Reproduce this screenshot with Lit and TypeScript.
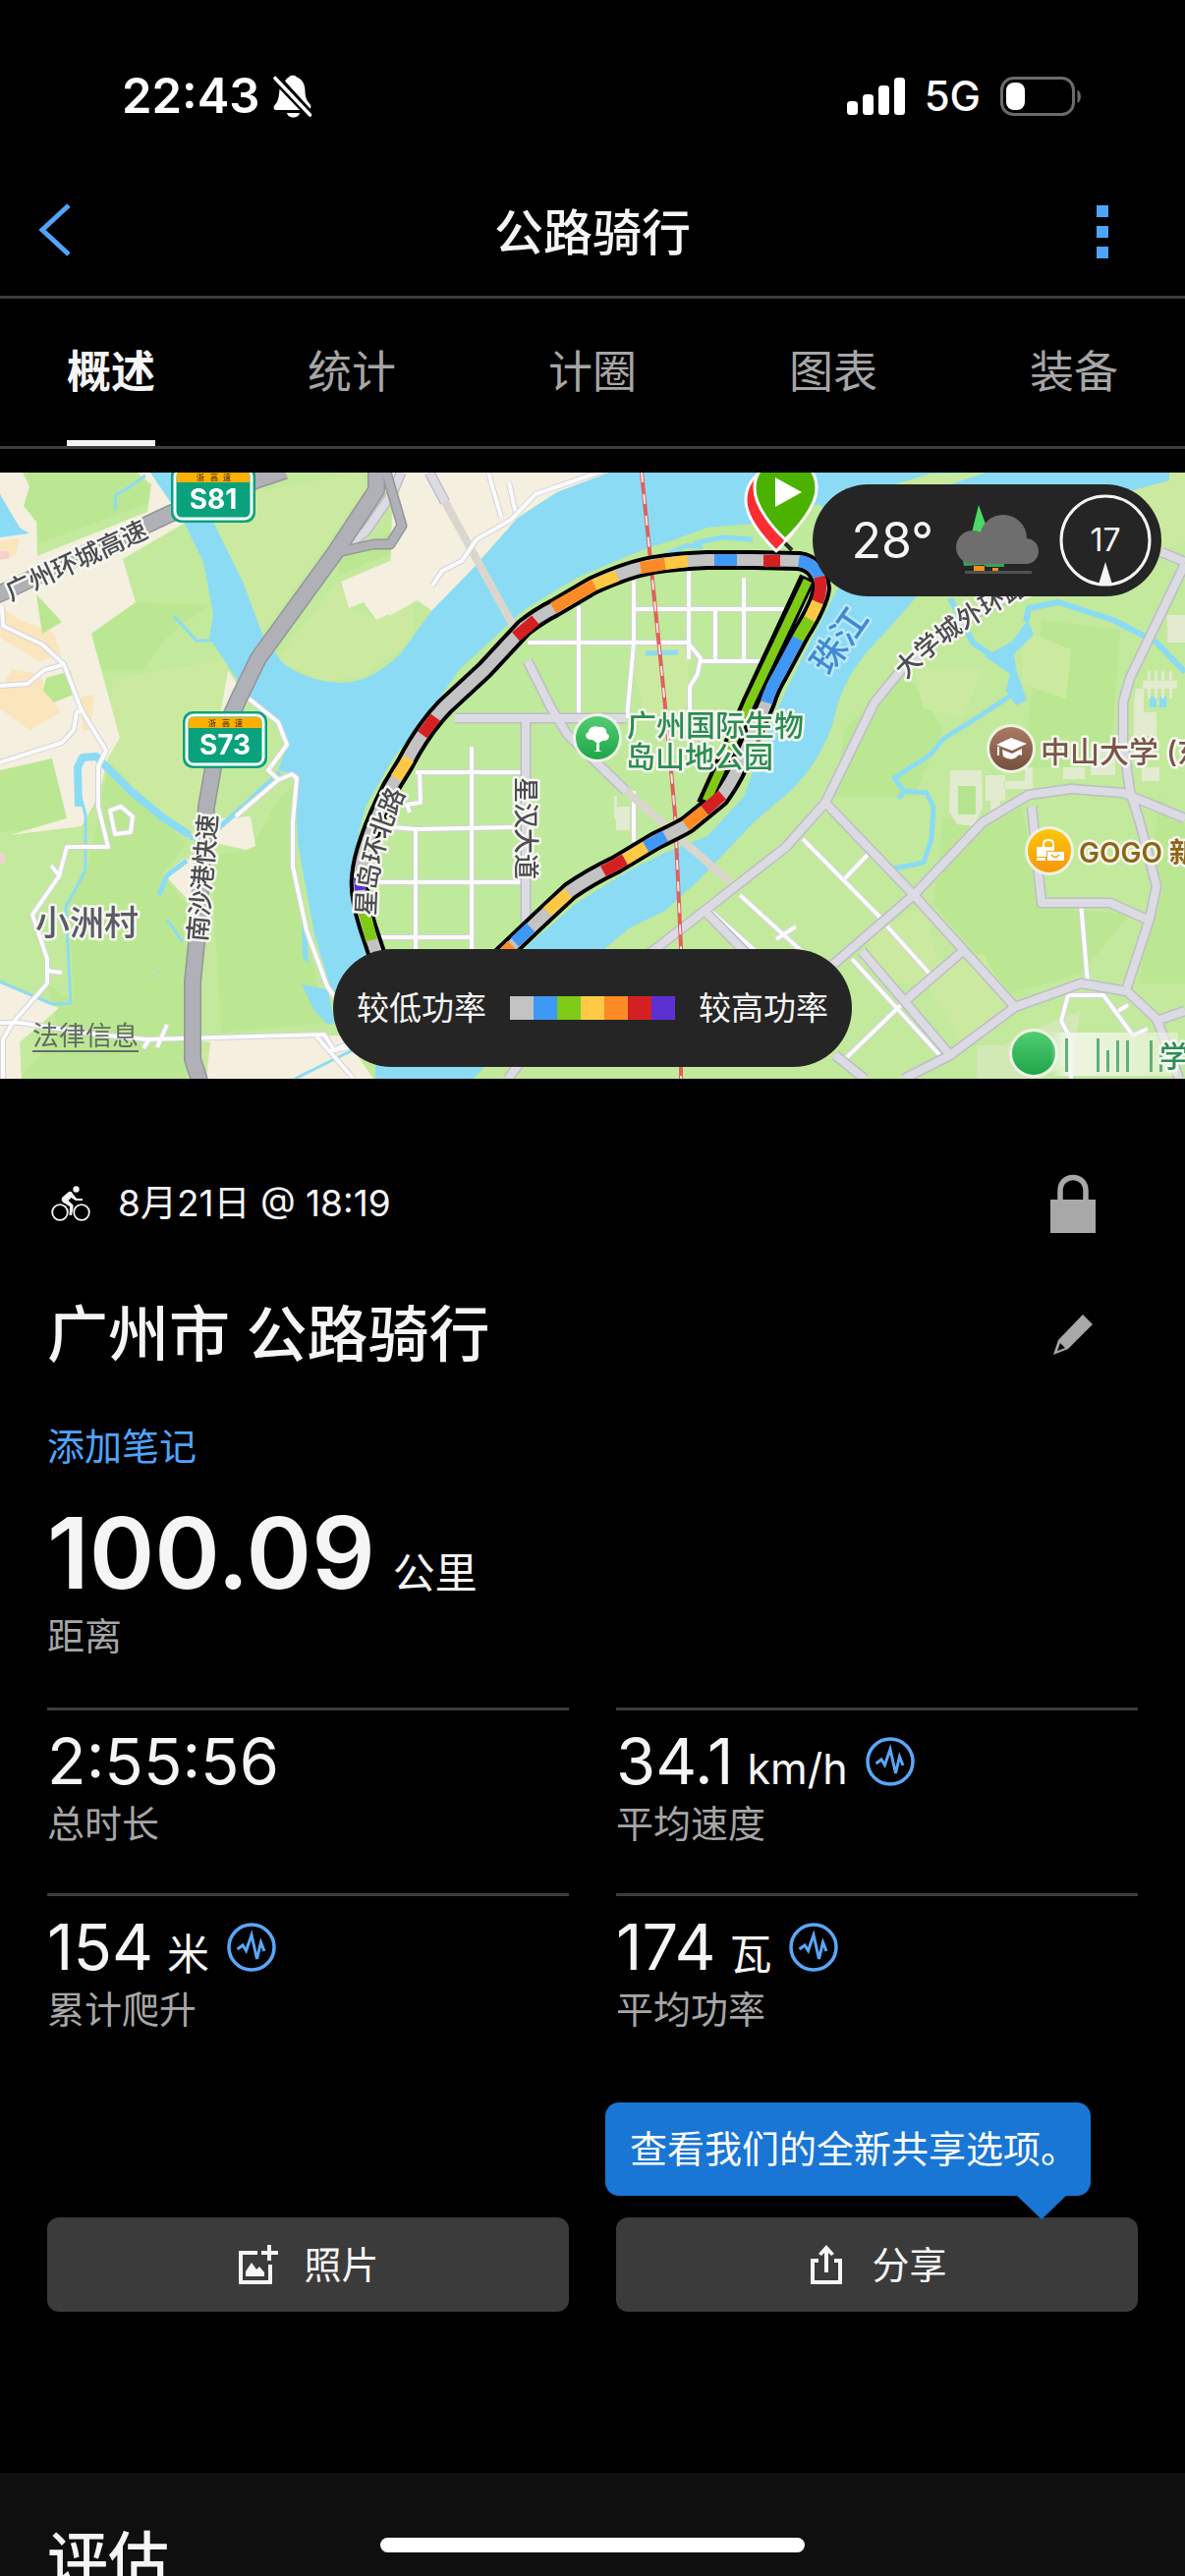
import { LitElement, html, svg, css, nothing } from "lit";
import { customElement, property } from "lit/decorators.js";
import { classMap } from "lit/directives/class-map.js";

const GREY = "#c3c3c3";
const BLUE = "#3f97f6";
const GREEN = "#7fca16";
const YELLOW = "#fdc945";
const ORANGE = "#fc8b25";
const RED = "#d52022";
const PURPLE = "#5c31d3";
const POWER_SCALE = [GREY, BLUE, GREEN, YELLOW, ORANGE, RED, PURPLE];

const sheet = css`
  :host {
    font-family: Inter, "Noto Sans CJK SC", sans-serif;
    color: #f5f5f5;
  }
  *,
  *::before,
  *::after {
    box-sizing: border-box;
  }
  button {
    font: inherit;
    color: inherit;
    background: none;
    border: 0;
    margin: 0;
    padding: 0;
    cursor: pointer;
  }
  svg {
    display: block;
    flex: none;
  }
`;

@customElement("status-bar")
class StatusBar extends LitElement {
  static styles = [
    sheet,
    css`
      :host {
        box-sizing: border-box;
        display: flex;
        justify-content: space-between;
        align-items: center;
        height: 172px;
        padding: 24px 104px 0 124px;
        color: #fff;
      }
      .side {
        display: flex;
        align-items: center;
      }
      .time {
        font-size: 49px;
        line-height: 60px;
        font-weight: 600;
      }
      .left {
        gap: 12px;
      }
      .right {
        gap: 20px;
      }
      .network {
        font-size: 42px;
        line-height: 60px;
        font-weight: 500;
      }
    `,
  ];
  render() {
    return html`
      <div class="side left">
        <span class="time">22:43</span>
        <svg width="42" height="46" viewBox="0 0 42 46" fill="#fff">
          <path d="M13 7.5C14.500 5 16 4 17 3.500 18 1 24 1 25 3.500 31 6 33.500 11 33.500 18 33.500 24 35.500 28 38.500 31 40 33 39.500 34.500 38.500 35.500Z" />
          <path d="M7.500 15.500 28 37H4C1 37 1 33.500 3 31.500 6.500 28 7 22 7.500 15.500Z" />
          <path d="M15 40H28C27 46 16 46 15 40Z" />
          <path d="M3 4.500 38.500 42" stroke="#fff" stroke-width="3.600" stroke-linecap="round" />
        </svg>
      </div>
      <div class="side right">
        <svg width="60" height="40" viewBox="0 0 60 40" fill="#fff">
          <rect x="1" y="25" width="11" height="14" rx="3.500" />
          <rect x="17" y="18" width="11" height="21" rx="3.500" />
          <rect x="33" y="9" width="11" height="30" rx="3.500" />
          <rect x="49" y="1" width="11" height="38" rx="3.500" />
        </svg>
        <span class="network">5G</span>
        <svg width="84" height="40" viewBox="0 0 84 40">
          <rect x="1.500" y="1.500" width="73" height="37" rx="12" fill="none" stroke="#6b6b6b" stroke-width="3" />
          <rect x="6" y="6" width="19" height="28" rx="8" fill="#fff" />
          <path d="M78.500 13.500C83 15.500 83 25 78.500 27Z" fill="#6b6b6b" />
        </svg>
      </div>
    `;
  }
}

@customElement("title-bar")
class TitleBar extends LitElement {
  static styles = [
    sheet,
    css`
      :host {
        box-sizing: border-box;
        display: grid;
        grid-template-columns: 120px 1fr 120px;
        align-items: center;
        height: 132px;
        border-bottom: 3px solid #3d3d3d;
      }
      h1 {
        margin: 0;
        text-align: center;
        font-size: 50px;
        line-height: 60px;
        font-weight: 500;
      }
      .back {
        padding: 0 0 6px 38px;
      }
      .more {
        justify-self: end;
        padding: 0 77px 0 20px;
      }
    `,
  ];
  render() {
    return html`
      <button class="back" aria-label="返回">
        <svg width="36" height="56" viewBox="0 0 36 56" fill="none" stroke="#4fa4fb" stroke-width="5">
          <path d="M32 3 5 28 32 53" />
        </svg>
      </button>
      <h1>公路骑行</h1>
      <button class="more" aria-label="更多">
        <svg width="14" height="56" viewBox="0 0 14 56" fill="#4fa4fb">
          <path d="M1 0h12v12H1zM1 21h12v12H1zM1 42h12v12H1z" />
        </svg>
      </button>
    `;
  }
}

@customElement("tab-strip")
class TabStrip extends LitElement {
  @property({ attribute: false }) tabs: string[] = [];
  @property({ type: Number }) active = 0;
  static styles = [
    sheet,
    css`
      :host {
        box-sizing: border-box;
        display: flex;
        justify-content: space-between;
        height: 153px;
        padding: 0 68px;
        border-bottom: 3px solid #3d3d3d;
      }
      .tab {
        padding-top: 6px;
        border-bottom: 6px solid transparent;
        font-size: 45px;
        line-height: 60px;
        color: #a6a6a6;
      }
      .tab.on {
        color: #f5f5f5;
        font-weight: 700;
        border-color: #f5f5f5;
      }
    `,
  ];
  render() {
    return this.tabs.map(
      (t, i) => html`<button class=${classMap({ tab: true, on: i === this.active })} aria-pressed=${i === this.active}>${t}</button>`
    );
  }
}

const GREEN_PATCHES = [
  "27,0 138,0 150,12 154,30 40,72 38,50 24,34 30,14",
  "93,164 138,132 213,135 173,164 145,201 103,201",
  "0,303 53,291 68,352 40,362 0,366",
  "110,300 140,330 190,378 165,409 190,440 190,617 20,617 60,570 48,520 75,540 70,440 90,400",
  "215,390 255,384 285,330 298,320 300,400 330,560 225,570",
  "345,80 400,60 404,80 345,104",
  "860,260 920,200 960,260 930,330 850,330",
  "960,350 1000,360 1040,340 1060,440 1150,450 1100,510 1030,530 950,440",
  "1060,150 1140,160 1130,300 1040,300",
  "1180,330 1206,360 1206,520 1160,520",
  "540,262 640,300 640,380 560,420 542,420",
  "400,310 530,280 530,350 400,350",
];
const PALE_PATCHES = [
  "115,210 232,190 215,330 200,370 160,350 110,290",
  "200,30 370,0 372,18 262,170",
  "280,192 345,110 355,138 383,150 420,130 420,170 370,208 330,212",
  "930,200 1000,200 980,250 940,240",
  "1040,160 1090,180 1085,230 1040,215",
  "880,470 940,440 960,520 900,520",
  "930,500 1000,490 1030,540 980,580",
  "1080,30 1206,10 1206,70 1100,110",
  "960,10 1100,20 1206,0 1206,30 1000,60",
  "230,576 320,576 325,590 300,617 215,617 205,590",
];

const CREAM = [
  "0,0 23,0 30,14 24,34 37,50 38,85 150,40 154,12 140,0 175,0 190,50 125,88 138,132 93,164 122,270 110,290 100,330 83,360 10,369 68,352 53,291 0,303",
  "400,0 620,0 567,20 527,46 480,99 441,142 425,130 396,146",
  "0,520 60,545 20,580 22,617 0,617",
  "167,409 187,393 197,395 194,438",
  "222,352 255,350 260,380 250,384 220,377",
  "232,201 241,215 224,247",
  "347,111 420,80 420,132 383,150 370,132 355,138",
  "190,575 350,573 380,617 210,617 214,580 194,577",
];

const WHITE_ROADS = [
  "M2,136 3,156 43,175 65,195 83,242 108,283 100,299 100,340 110,381 68,381 60,411 33,450 48,495 48,520 13,560 3,577V617",
  "M0,217 28,215 45,201 63,196",
  "M0,295 63,275 75,262 78,244 84,242",
  "M112,344 123,340 135,350 133,366 117,368Z",
  "M48,507 63,509M52,400 60,410",
  "M0,560H20L100,572 150,577 330,572 340,588 382,580",
  "M146,586 152,577M160,585 170,562",
  "M240,350 283,313 297,307 302,311 298,356 298,401 312,466 333,523 345,540",
  "M253,230 283,254 292,277 273,303 284,313",
  "M322,574 360,617M335,590 400,560",
  "M537,173H700L713,189 710,205 702,218V250",
  "M713,192H775M589,136V245M645,110V173L638,250M701,99V190M728,140V192M757,107V192M647,139H798",
  "M480,279V490M423,305H530M427,306 428,336 414,338 417,346M423,362V490M377,359 423,363 523,361M372,417H530M378,473H480M645,324V376",
  "M497,0 510,45M518,10 525,42",
  "M817,373 897,454M903,462 947,511M860,413 883,389M867,495 960,597M1100,438 1107,520",
  "M1087,532H1123L1153,573M1153,573 1168,566M1138,548 1148,542M1087,532 1080,558 1090,577V617",
  "M723,446 800,515M753,430 830,500M790,475 810,462M860,597 923,536",
];

const GREY_ROADS = [
  "M463,250H637",
  "M535,254V458",
  "M537,192 560,238 577,266 637,324",
  "M437,0 453,30",
  "M1182,81 1206,91",
  "M1206,93 1150,209 1143,234V275L1150,324 1160,356 1177,421 1170,454 1147,524",
  "M517,617 560,560 667,485 717,446 800,381 840,336 890,234 917,201 980,150 1040,120",
  "M840,336 930,430 1033,544",
  "M800,530 850,499 930,430 1000,356 1047,328 1090,322 1143,326 1206,352",
  "M1050,340 1060,438H1130L1170,456",
  "M920,617 967,593 1033,544 1100,520 1147,528 1177,556 1190,589 1200,617M1177,558 1206,548",
  "M923,536 980,487M877,487 967,593M850,593 880,617M717,446 770,500",
  "M347,79 372,60 400,20 408,0",
];

const ROUTE =
  "M385,495 374,462Q364,430 366,412 368,380 398,320L412,297Q430,262 453,238L493,201 533,158Q548,146 564,138L603,115Q640,98 665,94 690,90 720,89L767,89 813,90Q834,93 836,118 834,134 815,164L793,205Q784,220 780,234L752,299Q744,316 733,331L700,358Q694,362 667,375L627,399Q600,412 580,426L550,454 508,494";

const ROUTE_PARTS: [string, string][] = [
  [GREEN, "M371,447 378,476"],
  [PURPLE, "M366,412 367,425"],
  [YELLOW, "M403,311 416,291"],
  [RED, "M430,267 443,249"],
  [RED, "M525,167 545,150"],
  [ORANGE, "M563,138 605,114"],
  [YELLOW, "M605,114 628,105"],
  [ORANGE, "M652,97 677,93"],
  [YELLOW, "M677,93 700,90"],
  [BLUE, "M727,89H750"],
  [RED, "M777,90H794"],
  [BLUE, "M813,90Q829,92 834,106"],
  [RED, "M834,106Q837,118 832,132"],
  [YELLOW, "M832,132 824,149"],
  [GREEN, "M824,149 812,169"],
  [BLUE, "M812,169 793,205Q784,220 780,234"],
  [RED, "M735,328 717,344"],
  [ORANGE, "M717,344 698,359"],
  [BLUE, "M677,370 657,381"],
  [YELLOW, "M657,381 636,394"],
  [RED, "M636,394 614,406"],
  [YELLOW, "M578,428 557,447"],
  [BLUE, "M540,463 524,478"],
  [ORANGE, "M521,481 508,494"],
];

@customElement("ride-map")
class RideMap extends LitElement {
  static styles = [
    sheet,
    css`
      :host {
        display: block;
        position: relative;
        overflow: hidden;
        aspect-ratio: 1206 / 617;
      }
      .canvas {
        width: 100%;
        height: 100%;
      }
      text {
        font-family: Inter, "Noto Sans CJK SC", sans-serif;
        font-weight: 500;
        paint-order: stroke;
        stroke: #f6f7f0;
        stroke-width: 5px;
        stroke-linejoin: round;
      }
      .road {
        font-size: 26px;
        fill: #4c4c52;
      }
      .village {
        font-size: 35px;
        fill: #5b5b66;
      }
      .park {
        font-size: 30px;
        fill: #2b8c52;
      }
      .river {
        font-size: 36px;
        fill: #4189d2;
        stroke: #b6e8fa;
      }
      .school {
        font-size: 30px;
        fill: #7b5548;
      }
      .shop {
        font-size: 28px;
        font-weight: 600;
        fill: #8f6514;
      }
      .code {
        font-size: 28px;
        font-weight: 700;
        fill: #fff;
        stroke: none;
      }
      .prov {
        font-size: 8px;
        fill: #4c3a10;
        stroke: none;
      }
      .weather,
      .legend {
        position: absolute;
        display: flex;
        align-items: center;
        background: #252525;
      }
      .weather {
        top: 12px;
        right: 24px;
        height: 114px;
        padding: 0 10px 0 40px;
        border-radius: 57px;
      }
      .temp {
        font-size: 50px;
        line-height: 60px;
        margin-right: 22px;
      }
      .sky {
        margin-right: 20px;
      }
      .wind {
        display: grid;
        place-items: center;
      }
      .wind > * {
        grid-area: 1 / 1;
      }
      .speed {
        font-size: 32px;
        line-height: 40px;
      }
      .legend {
        bottom: 12px;
        left: 50%;
        transform: translateX(-50%);
        height: 120px;
        gap: 24px;
        padding: 0 24px;
        border-radius: 60px;
        font-size: 33px;
        line-height: 40px;
        white-space: nowrap;
      }
      .scale {
        display: flex;
      }
      .step {
        width: 24px;
        height: 24px;
      }
      .legal {
        position: absolute;
        left: 33px;
        bottom: 25px;
        font-size: 27px;
        line-height: 36px;
        color: #656c62;
        text-underline-offset: 5px;
      }
    `,
  ];

  shield(x: number, y: number, code: string) {
    return svg`<g transform="translate(${x} ${y})">
      <rect width="86" height="58" rx="10" fill="#0aa27c" />
      <rect x="4" y="4" width="78" height="50" rx="7" fill="none" stroke="#fff" stroke-width="3" />
      <path d="M6 17V11Q6 6 11 6H75Q80 6 80 11V17Z" fill="#fdb000" />
      <text class="prov" x="26" y="15">浙</text>
      <text class="prov" x="40" y="15">高</text>
      <text class="prov" x="53" y="15">速</text>
      <text class="code" x="43" y="44" text-anchor="middle">${code}</text>
    </g>`;
  }

  pin(x: number, y: number, fill: string) {
    return svg`<g transform="translate(${x} ${y})" fill="url(#${fill})">
      <circle r="25" fill="#f2f4ea" opacity="0.900" />
      <circle r="22" />
    </g>`;
  }

  drawing() {
    return svg`
      <defs>
        <linearGradient id="leaf" x2="0" y2="1"><stop stop-color="#52cd72" /><stop offset="1" stop-color="#1fa548" /></linearGradient>
        <linearGradient id="bark" x2="0" y2="1"><stop stop-color="#a97a62" /><stop offset="1" stop-color="#75503f" /></linearGradient>
        <linearGradient id="sun" x2="0" y2="1"><stop stop-color="#fcc70c" /><stop offset="1" stop-color="#f7960c" /></linearGradient>
        <linearGradient id="fade"><stop stop-color="#fff" stop-opacity="0" /><stop offset="0.150" stop-color="#f3f6ea" stop-opacity="0.900" /><stop offset="1" stop-color="#f3f6ea" stop-opacity="0.500" /></linearGradient>
        <path id="north-road" d="M382,451Q381,395 411,330" />
        <path id="outer-road" d="M922,211Q975,153 1075,110" />
      </defs>
      <rect width="1206" height="617" fill="#c3e99d" />
      <g fill="#bbe793">${GREEN_PATCHES.map((p) => svg`<polygon points=${p} />`)}</g>
      <g fill="#cbeaa0">${PALE_PATCHES.map((p) => svg`<polygon points=${p} />`)}</g>
      <g fill="#f4efdf">${CREAM.map((p) => svg`<polygon points=${p} />`)}</g>
      <g fill="#fbe5bd">
        <polygon points="3,138 20,150 55,163 62,185 40,192 0,168" />
        <polygon points="0,70 20,66 16,84 0,90" />
        <polygon points="12,200 40,205 46,218 62,244 30,262 0,240 0,222" />
        <polygon points="82,228 96,226 92,262 84,262" />
      </g>
      <g fill="#f6cfd0"><rect x="0" y="80" width="9" height="8" /><rect x="0" y="388" width="5" height="10" /></g>
      <g fill="#b9e690">
        <polygon points="37,124 63,152 43,164" />
        <polygon points="47,209 72,202 77,225 55,234 44,222" />
      </g>
      <g fill="#8bdbf5">
        <path d="M153,0 187,50 207,91 217,144 213,168 240,209 253,230 283,250 293,275 283,303 300,307 303,377 320,470 340,536 382,590 382,617H482L520,575 560,530 613,487 640,464 677,446 713,413 767,356 800,328Q832,300 848,255 856,205 900,164L933,126 1000,60 1190,8V0H620L567,20 527,46 480,99 440,140 407,185Q377,214 347,214 310,212 287,193L267,164 247,111 217,50 173,0Z" />
        <polygon points="0,22 20,56 30,62 0,66" />
        <polygon points="183,479 163,507 147,520 165,504" />
        <polygon points="307,521 333,526 341,560 334,562 320,548" />
        <polygon points="307,455 312,468 314,500 308,494" />
        <polygon points="1030,172 1046,150 1052,165 1032,185 1034,200 1045,232 1034,237 1024,222 1028,205 1002,187" />
        <rect x="1170" y="228" width="7" height="11" /><rect x="1180" y="228" width="7" height="11" />
      </g>
      <g fill="none" stroke="#8bdbf5" stroke-linejoin="round">
        <path stroke-width="8" d="M80,340 79,300 84,290 98,289 133,324 167,352 193,369" />
        <path stroke-width="5" d="M193,372 220,364 245,342 285,305M190,395 170,410 162,430" />
        <path stroke-width="3" d="M82,330 87,348V405L67,442 72,540 53,541 0,518M177,146 200,171H217M148,3 127,18 118,22 117,38M170,455 186,478M300,617 385,575" />
        <path stroke-width="6" d="M967,128 990,173 1010,187M1044,152 1047,138 1077,132 1133,150 1177,173 1206,203" />
        <path stroke-width="5" d="M1030,226 1000,246 960,271 947,287 910,311 920,324 943,326 950,340 948,373 940,397 910,403M920,324 915,332" />
      </g>
      <path fill="#bfe99b" d="M358,397 366,470 385,520 395,600H470L504,510 587,438 640,405 677,387 720,370 757,330 780,266 800,222 833,156 856,111V50L833,32 800,44 767,52 720,56 690,67 653,79 587,107 533,140 467,201 433,250 400,291 372,340Z" />
      <polygon fill="#cbeaa0" points="640,178 700,176 702,245 655,245" />
      <path fill="none" stroke="#8bdbf5" stroke-width="5" d="M676,84 700,74 715,76M706,72 735,66 766,68M657,184 690,183" />
      <polygon fill="#c6ea9e" points="911,12 947,1 1003,0 967,12" />
      <g fill="#e6ead6" opacity="0.900">
        <polygon points="967,303 999,303 1000,340 992,360 974,358 966,345" />
        <path d="M1003,308h20v26h-5v12h-10v-12h-5zM1022,322h29v-22h-8v14h-21z" />
        <path d="M1156,220h8v24h13v24h-23v-34zM1163,212h35v8h-35zM1168,202h3v28h-3zM1175,202h3v28h-3zM1182,202h3v28h-3zM1190,202h3v28h-3z" />
        <path d="M1082,300h22v12h-22zM1110,280h25v28h-25zM1162,300h18v14h-18zM625,329h3v24h-3zM627,340h14v24h-14zM1188,145h18v28h-18z" />
        <path d="M1068,560 1100,548 1090,600 1060,617H994V583H1022Z" opacity="0.500" />
      </g>
      <polygon fill="#b5e48f" points="975,319 993,319 993,348 975,348" />
      <g fill="none" stroke-linejoin="round">
        <g stroke="#d3d3da" stroke-width="6">${WHITE_ROADS.map((d) => svg`<path d=${d} />`)}</g>
        <g stroke="#fbfbfc" stroke-width="4">${WHITE_ROADS.map((d) => svg`<path d=${d} />`)}</g>
        <path stroke="#dbd6cd" stroke-width="8" d="M453,30 530,170M637,324 743,417" />
        <g stroke="#bdbdc6" stroke-width="11">${GREY_ROADS.map((d) => svg`<path d=${d} />`)}</g>
        <g stroke="#dcdbe4" stroke-width="8">${GREY_ROADS.map((d) => svg`<path d=${d} />`)}</g>
        <path stroke="#d3d3da" stroke-width="6" d="M440,115 450,100 470,90 485,68 520,48 545,22 620,-4" />
        <path stroke="#fbfbfc" stroke-width="4" d="M440,115 450,100 470,90 485,68 520,48 545,22 620,-4" />
        <g stroke="#94949b">
          <path stroke-width="18" d="M-4,125 173,42 260,8 290,-2M205,625 196,597V519L200,479 210,340 220,283 243,230 263,189 340,83 383,18V-4" />
          <path stroke-width="11" d="M340,82 380,73 397,73 409,54 392,-4" />
        </g>
        <g stroke="#b0b0b7">
          <path stroke-width="15" d="M-4,125 173,42 260,8 290,-2M205,625 196,597V519L200,479 210,340 220,283 243,230 263,189 340,83 383,18V-4" />
          <path stroke-width="8" d="M340,82 380,73 397,73 409,54 392,-4" />
        </g>
        <path stroke="#e0605c" stroke-width="4" d="M653,0 677,238 687,348 693,483V617" />
        <path stroke="#fdeceb" stroke-width="2" stroke-dasharray="10 12" d="M653,0 677,238 687,348 693,483V617" />
        <g stroke="#000" stroke-width="20">
          <path stroke-width="17" d="M822,107 763,234 733,303 717,338" />
          <path d=${ROUTE} />
        </g>
        <path stroke=${GREEN} stroke-width="9" d="M822,110 763,234 733,303 719,334" />
        <path stroke=${GREY} stroke-width="12" d=${ROUTE} />
        <g stroke-width="12">${ROUTE_PARTS.map(([c, d]) => svg`<path stroke=${c} d=${d} />`)}</g>
      </g>
      ${this.shield(174, -7, "S81")} ${this.shield(186, 243, "S73")}
      <g>
        <text class="road" transform="translate(11 131) rotate(-25)">广州环城高速</text>
        <text class="village" x="36" y="471">小洲村</text>
        <text class="road" transform="translate(210 478) rotate(-85)">南沙港快速</text>
        <text class="road"><textPath href="#north-road">星岛环北路</textPath></text>
        <text class="road" transform="translate(526 310) rotate(90)">星汉大道</text>
        <text class="river" transform="translate(854 171) rotate(-55)" y="13" text-anchor="middle">珠江</text>
        <text class="road"><textPath href="#outer-road">大学城外环路</textPath></text>
        <text class="park" x="638" y="268">广州国际生物</text>
        <text class="park" x="637" y="300">岛山地公园</text>
        <text class="school" x="1059" y="295">中山大学 (东</text>
        <text class="shop" x="1098" y="397">GOGO 新</text>
      </g>
      ${this.pin(608, 270, "leaf")} ${this.pin(1029, 281, "bark")} ${this.pin(1068, 385, "sun")} ${this.pin(1052, 591, "leaf")}
      <g fill="#fff">
        <path d="M607 283v-8l-4-3c-7 1-9-6-4-8 0-5 7-7 10-5 6-1 9 3 8 6 6 3 2 9-4 8l-3 2v8l3 1h-9z" />
        <path d="M1014 277 1029 270 1045 276 1030 283ZM1020 282 1030 286 1040 281V288Q1037 286 1034 290 1029 294 1021 289ZM1015 279h2v9h-2z" />
        <path d="M1055 381h18v4h-8v6h-10zM1055 392h9v3h-9zM1066 386h17v9h-17z" />
      </g>
      <path d="M1062 381v-3q0-4 5-4t5 4v3" fill="none" stroke="#fff" stroke-width="2" />
      <path d="M1070 389q4 5 8 0" fill="none" stroke="#f9a40c" stroke-width="1.500" />
      <path d="M1069 570h130v44h-130z" fill="url(#fade)" />
      <g fill="#3e9f62" opacity="0.800">
        <path d="M1084 576h3v34h-3zM1116 576h3v34h-3zM1126 588h3v22h-3zM1136 578h3v32h-3zM1146 578h3v32h-3zM1170 578h3v32h-3zM1180 588h3v22h-3z" />
      </g>
      <text class="park" x="1180" y="605">学</text>
      <g stroke="#fff" stroke-width="3" stroke-linejoin="round">
        <path fill="#f92d33" d="M790 80C778 68 759 46 759 28 759 10 772-4 790-4S821 10 821 28C821 46 802 68 790 80Z" />
        <path fill="#4bb300" d="M799 68C786 56 768 34 768 16 768-3 782-14 800-14S831-3 831 16C831 34 812 56 799 68Z" />
      </g>
      <path fill="#fff" d="M789 5 816 20 789 35Z" />
      <path fill="none" stroke="#000" stroke-width="4" opacity="0.800" d="M799 72 806 79" />
    `;
  }

  render() {
    return html`
      <svg class="canvas" viewBox="0 0 1206 617" preserveAspectRatio="xMidYMid slice" role="img" aria-label="骑行路线">${this.drawing()}</svg>
      <a class="legal" href="#legal">法律信息</a>
      <div class="weather">
        <span class="temp">28°</span>
        <svg class="sky" width="86" height="78" viewBox="971 512 86 78">
          <path fill="#4cd964" d="M995 515 1003 537 997 545 988 543Z" />
          <path fill="#34a853" d="M979 571H1021V578H1003L1000 576 980 577Z" />
          <g fill="#6e6e6e">
            <circle cx="989" cy="558" r="17" /><circle cx="1020" cy="549" r="24" /><circle cx="1043" cy="562" r="13" />
            <rect x="989" y="553" width="54" height="22" />
          </g>
          <path fill="#fb8c1e" d="M990 577h11v5h-11zM1009 579h6v3h-6z" />
          <path fill="#505050" d="M981 582h68v3h-68z" />
        </svg>
        <div class="wind">
          <svg width="94" height="94" viewBox="0 0 94 94">
            <circle cx="47" cy="47" r="45" fill="none" stroke="#f5f5f5" stroke-width="3" />
            <path fill="#f5f5f5" d="M47 69 54 92H40Z" />
          </svg>
          <span class="speed">17</span>
        </div>
      </div>
      <div class="legend">
        <span>较低功率</span>
        <div class="scale">${POWER_SCALE.map((c) => html`<span class="step" style="background:${c}"></span>`)}</div>
        <span>较高功率</span>
      </div>
    `;
  }
}

@customElement("stat-cell")
class StatCell extends LitElement {
  @property() value = "";
  @property() unit = "";
  @property() label = "";
  @property({ type: Boolean }) chart = false;
  static styles = [
    sheet,
    css`
      :host {
        box-sizing: border-box;
        display: block;
        height: 189px;
        padding-top: 14px;
        border-top: 3px solid #3d3d3d;
      }
      .row {
        display: flex;
        align-items: center;
        gap: 18px;
        height: 76px;
      }
      .reading {
        display: flex;
        align-items: baseline;
        gap: 14px;
      }
      .value {
        font-size: 65px;
        line-height: 76px;
      }
      .unit {
        font-size: 43px;
        line-height: 44px;
      }
      .label {
        font-size: 38px;
        line-height: 50px;
        color: #a6a6a6;
      }
    `,
  ];
  render() {
    return html`
      <div class="row">
        <div class="reading">
          <span class="value">${this.value}</span>
          ${this.unit ? html`<span class="unit">${this.unit}</span>` : nothing}
        </div>
        ${this.chart
          ? html`<button aria-label="查看图表">
              <svg width="50" height="50" viewBox="0 0 50 50" fill="none" stroke="#5aa7f9">
                <circle cx="25" cy="25" r="23" stroke-width="3.500" />
                <path stroke-width="3" d="M10.500 27 16 23 19.500 28.500 25 12.500 30.500 37 34.500 20 38 29" />
              </svg>
            </button>`
          : nothing}
      </div>
      <div class="label">${this.label}</div>
    `;
  }
}

@customElement("app-root")
class AppRoot extends LitElement {
  static styles = [
    sheet,
    css`
      :host {
        display: flex;
        flex-direction: column;
        position: relative;
        height: 100vh;
        overflow: hidden;
        background: #000;
      }
      status-bar,
      title-bar,
      tab-strip,
      ride-map,
      section {
        flex: none;
      }
      ride-map {
        margin-top: 24px;
      }
      .summary {
        padding: 92px 48px 164px;
      }
      .line {
        display: flex;
        justify-content: space-between;
        align-items: center;
        padding-right: 34px;
      }
      .meta {
        display: flex;
        align-items: center;
        gap: 28px;
        padding-left: 4px;
        font-size: 37px;
        line-height: 70px;
      }
      .tool {
        display: grid;
        place-items: center;
        width: 64px;
        height: 70px;
      }
      h2 {
        margin: 0;
        font-size: 62px;
        line-height: 80px;
        font-weight: 500;
      }
      .name {
        margin-top: 59px;
      }
      .note {
        display: block;
        margin-top: 49px;
        font-size: 38px;
        line-height: 48px;
        color: #4fa4fb;
      }
      .total {
        display: flex;
        align-items: baseline;
        gap: 18px;
        margin-top: 34px;
      }
      .km {
        font-size: 101px;
        line-height: 100px;
        font-weight: 600;
      }
      .unit {
        font-size: 43px;
        line-height: 44px;
      }
      .caption {
        margin: 10px 0 48px;
        font-size: 38px;
        line-height: 50px;
        color: #a6a6a6;
      }
      .stats,
      .actions {
        display: grid;
        grid-template-columns: 1fr 1fr;
        column-gap: 48px;
      }
      .actions {
        position: relative;
        margin-top: 141px;
      }
      .action {
        display: flex;
        align-items: center;
        justify-content: center;
        gap: 26px;
        height: 96px;
        border-radius: 12px;
        background: #3b3b3b;
        font-size: 38px;
        line-height: 48px;
      }
      .tip {
        position: absolute;
        right: 48px;
        bottom: 118px;
        padding: 0 13px 0 25px;
        border-radius: 14px;
        background: #1976d4;
        color: #fff;
        font-size: 38px;
        line-height: 95px;
        white-space: nowrap;
      }
      .tip::after {
        content: "";
        position: absolute;
        right: 25px;
        top: 100%;
        border: 25px solid transparent;
        border-top: 24px solid #1976d4;
        border-bottom: 0;
      }
      .review {
        padding: 50px 48px 0;
        background: #0f0f0f;
      }
      .home {
        position: absolute;
        bottom: 24px;
        left: 50%;
        width: 432px;
        height: 15px;
        margin-left: -216px;
        border-radius: 8px;
        background: #fff;
      }
    `,
  ];
  render() {
    return html`
      <status-bar></status-bar>
      <title-bar></title-bar>
      <tab-strip .tabs=${["概述", "统计", "计圈", "图表", "装备"]}></tab-strip>
      <ride-map></ride-map>
      <section class="summary">
        <div class="line">
          <div class="meta">
            <svg width="40" height="36" viewBox="0 0 40 36">
              <g fill="none" stroke="#f5f5f5" stroke-width="1.800"><circle cx="9" cy="27" r="7.800" /><circle cx="31" cy="27" r="7.800" /></g>
              <circle cx="25.500" cy="3.500" r="3.200" fill="#f5f5f5" />
              <path fill="#f5f5f5" d="M11 12 18 6Q21 5 22 8L26 13H32V15H25L20.500 12 17.500 15 22 19Q23 20 22.500 22L21 30H18.500L19 21 12.500 17Q10 15 11 12Z" />
            </svg>
            <span>8月21日 @ 18:19</span>
          </div>
          <button class="tool" aria-label="隐私设置">
            <svg width="46" height="60" viewBox="0 0 46 60">
              <path d="M10 28V17C10-1 36-1 36 17V28" fill="none" stroke="#a8a8a8" stroke-width="5.500" />
              <path d="M0 26H46V60H0Z" fill="#a8a8a8" />
            </svg>
          </button>
        </div>
        <div class="line name">
          <h2>广州市 公路骑行</h2>
          <button class="tool" aria-label="编辑名称">
            <svg width="40" height="42" viewBox="0 0 40 42">
              <path d="M30 0 40 10 15 35 0 41 5 26ZM7 29 4 37 12 34Z" fill="#a8a8a8" fill-rule="evenodd" />
            </svg>
          </button>
        </div>
        <button class="note">添加笔记</button>
        <div class="total"><span class="km">100.09</span><span class="unit">公里</span></div>
        <div class="caption">距离</div>
        <div class="stats">
          <stat-cell value="2:55:56" label="总时长"></stat-cell>
          <stat-cell value="34.1" unit="km/h" label="平均速度" chart></stat-cell>
          <stat-cell value="154" unit="米" label="累计爬升" chart></stat-cell>
          <stat-cell value="174" unit="瓦" label="平均功率" chart></stat-cell>
        </div>
        <div class="actions">
          <button class="action">
            <svg width="42" height="42" viewBox="0 0 42 42" fill="#f5f5f5">
              <path d="M2 7H21V11H6V37H32V21H36V41H2Z" />
              <path d="M31 1H35V7H42V11H35V17H31V11H25V7H31Z" />
              <path d="M9 33V28L15 19 20 26 23 23 28 29V33Z" />
            </svg>
            <span>照片</span>
          </button>
          <button class="action">
            <svg width="40" height="42" viewBox="0 0 40 42" fill="#f5f5f5">
              <path d="M4 15H12V19H8V37H32V19H28V15H36V41H4Z" />
              <path d="M20 1 28 10 25 12 22 9V29H18V9L15 12 12 10Z" />
            </svg>
            <span>分享</span>
          </button>
          <div class="tip" role="tooltip">查看我们的全新共享选项。</div>
        </div>
      </section>
      <section class="review"><h2>评估</h2></section>
      <div class="home"></div>
    `;
  }
}
